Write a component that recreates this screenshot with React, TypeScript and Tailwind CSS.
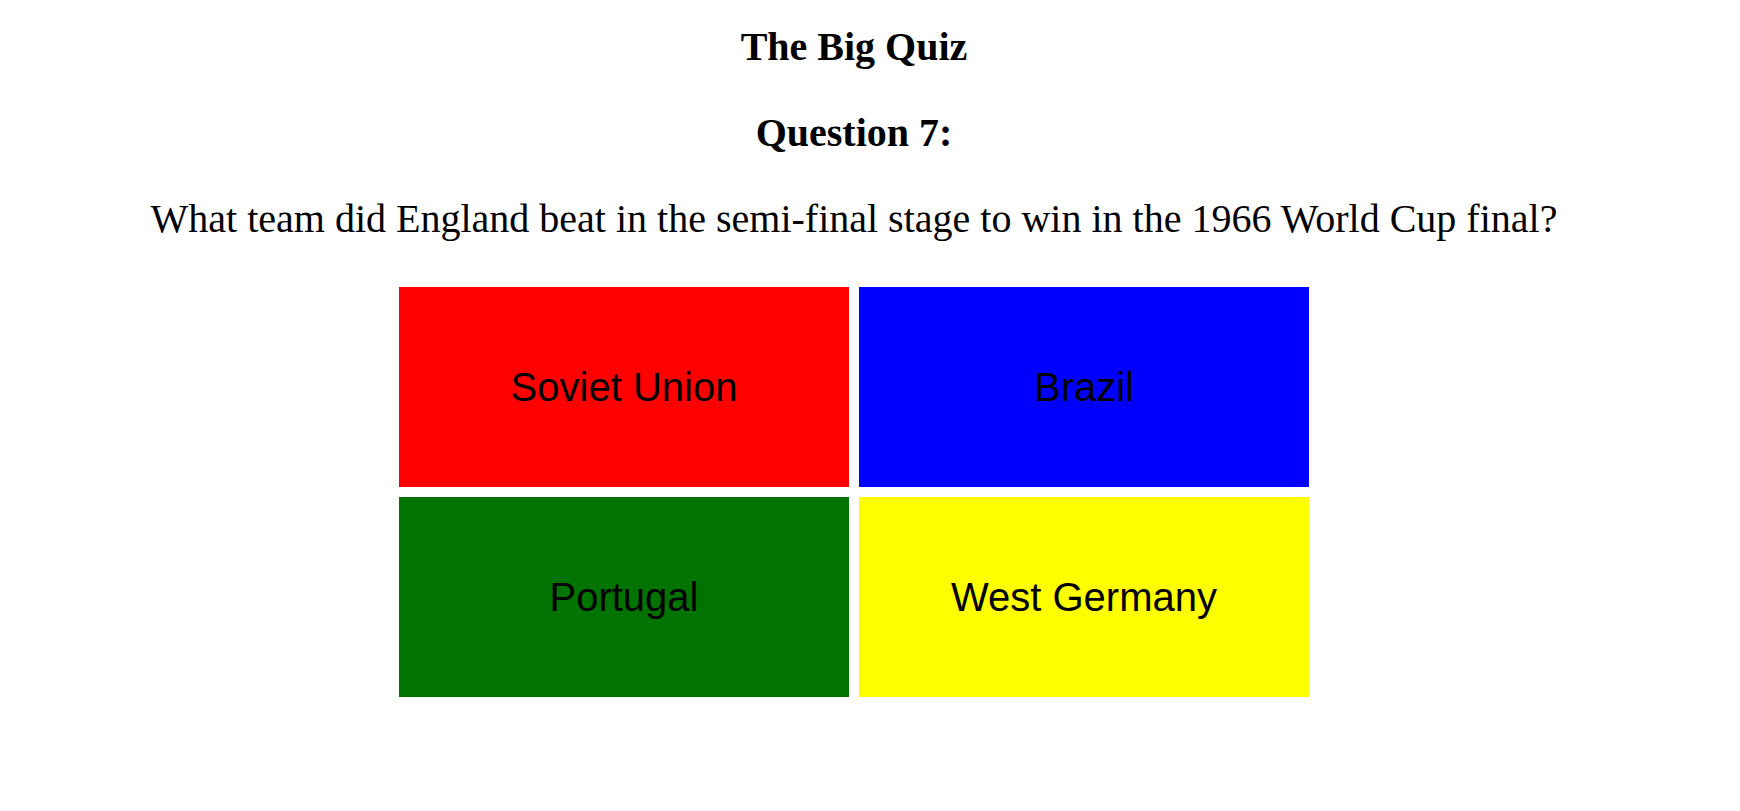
const answers = [
  { label: "Soviet Union", color: "bg-[#ff0000]" },
  { label: "Brazil", color: "bg-[#0000ff]" },
  { label: "Portugal", color: "bg-[#007300]" },
  { label: "West Germany", color: "bg-[#ffff00]" },
];

export default function App() {
  return (
    <div className="min-h-screen bg-white text-black">
      <div className="w-[1708px]">
        <div className="flex flex-col items-center font-['Liberation_Serif','Times_New_Roman',serif]">
          <h1 className="mt-[24px] text-[40px] font-bold leading-[46px]">The Big Quiz</h1>
          <h2 className="mt-[40px] text-[40px] font-bold leading-[46px]">Question 7:</h2>
          <p className="mt-[40px] text-[40px] leading-[46px]">
            What team did England beat in the semi-final stage to win in the 1966 World Cup final?
          </p>
        </div>
        <div className="mx-auto mt-[45px] grid w-[910px] grid-cols-2 gap-[10px]">
          {answers.map((a) => (
            <button
              key={a.label}
              className={`${a.color} flex h-[200px] items-center justify-center font-['Liberation_Sans',Arial,sans-serif] text-[40px] text-black`}
            >
              {a.label}
            </button>
          ))}
        </div>
      </div>
    </div>
  );
}
